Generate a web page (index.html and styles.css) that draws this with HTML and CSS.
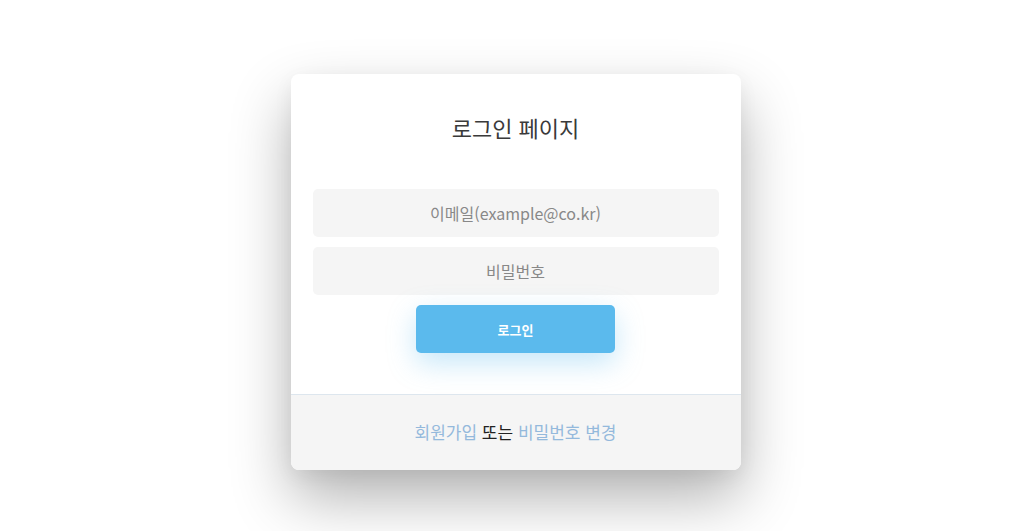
FILE: index.html
```html
<!DOCTYPE html>
<html lang="ko">
<head>
<meta charset="utf-8">
<title>로그인 페이지</title>
<link rel="stylesheet" href="styles.css">
</head>
<body>
<main class="page">
  <section class="card">
    <div class="card-body">
      <h1 class="title">로그인 페이지</h1>
      <form class="form">
        <input class="field" type="email" placeholder="이메일(example@co.kr)">
        <input class="field" type="password" placeholder="비밀번호">
        <button class="btn" type="button">로그인</button>
      </form>
    </div>
    <footer class="card-footer">
      <a class="link" href="#">회원가입</a> 또는 <a class="link" href="#">비밀번호 변경</a>
    </footer>
  </section>
</main>
</body>
</html>
```

FILE: styles.css
```css
* { box-sizing: border-box; }
html, body {
  margin: 0;
  padding: 0;
  background: #ffffff;
  font-family: "Noto Sans CJK KR", "Noto Sans", sans-serif;
}
.page {
  display: flex;
  justify-content: center;
  align-items: flex-start;
  min-height: 100vh;
  padding-top: 74px;
}
.card {
  width: 450px;
  background: #ffffff;
  border-radius: 8px;
  overflow: hidden;
  box-shadow: 0 28px 60px rgba(0, 0, 0, 0.3), 0 6px 20px rgba(0, 0, 0, 0.05);
}
.card-body {
  padding: 38px 22px 41px;
}
.title {
  margin: 0 0 47px;
  font-size: 22px;
  line-height: 30px;
  font-weight: 400;
  color: #3a3a3a;
  text-align: center;
}
.form {
  display: flex;
  flex-direction: column;
  align-items: center;
  gap: 10px;
}
.field {
  width: 100%;
  height: 48px;
  border: none;
  border-radius: 5px;
  background: #f5f5f5;
  font-family: inherit;
  font-size: 16px;
  color: #555;
  text-align: center;
  outline: none;
}
.field::placeholder {
  color: #888888;
}
.btn {
  width: 199px;
  height: 48px;
  border: none;
  border-radius: 5px;
  background: #5bbaed;
  color: #ffffff;
  font-family: inherit;
  font-size: 13px;
  font-weight: 700;
  cursor: pointer;
  box-shadow: 0 10px 28px rgba(91, 186, 237, 0.35);
}
.card-footer {
  height: 76px;
  border-top: 1px solid #dde6ee;
  background: #f5f5f5;
  display: flex;
  align-items: center;
  justify-content: center;
  padding-bottom: 3px;
  font-size: 17px;
  color: #222222;
  white-space: pre;
}
.link {
  color: #94b9dc;
  text-decoration: none;
}
```
